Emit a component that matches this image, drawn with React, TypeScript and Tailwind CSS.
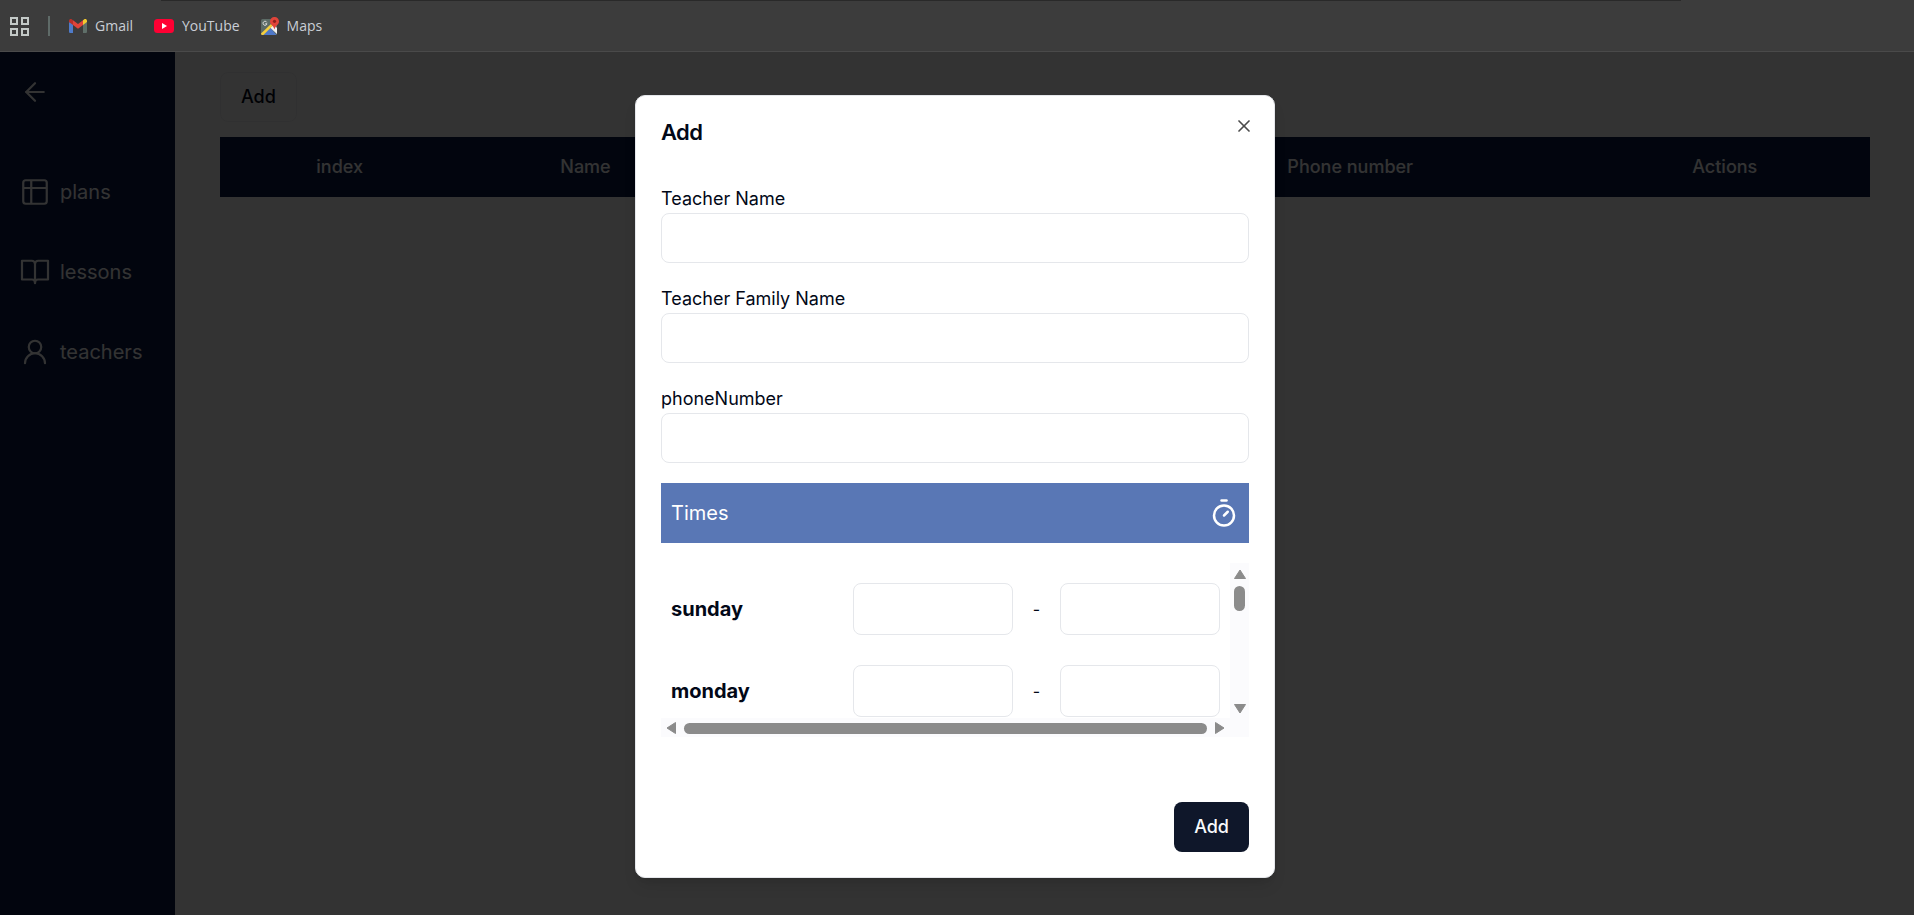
import type { ReactNode } from "react";
import { ArrowLeft, Timer, UserRound, X } from "lucide-react";

const bookmarks = [
  { label: "Gmail", icon: <GmailIcon /> },
  { label: "YouTube", icon: <YouTubeIcon /> },
  { label: "Maps", icon: <MapsIcon /> },
];

const links = [
  { label: "plans", icon: <PlansIcon /> },
  { label: "lessons", icon: <LessonsIcon /> },
  { label: "teachers", icon: <UserRound size={30} strokeWidth={1.75} /> },
];

const columns = [
  { label: "index", width: "w-[14.5%]" },
  { label: "Name", width: "w-[15.3%]" },
  { label: "", width: "w-[24.8%]" },
  { label: "Phone number", width: "w-[27.8%]" },
  { label: "Actions", width: "w-[17.6%]" },
];

const fields = [
  { id: "name", label: "Teacher Name" },
  { id: "family", label: "Teacher Family Name" },
  { id: "phone", label: "phoneNumber" },
];

const days = ["sunday", "monday"];

function GmailIcon() {
  return (
    <svg width="18" height="14" viewBox="0 0 18 14">
      <path d="M0 3v9.7C0 13.4.6 14 1.3 14H4V5z" fill="#4f7bc9" />
      <path d="M18 3v9.7c0 .7-.6 1.3-1.3 1.3H14V5z" fill="#5f6f69" />
      <path d="M14 1.2V6l4-3V1.800C18 .2 16.200-.5 15 .4z" fill="#f4c92f" />
      <path d="M0 1.800V3l4 3V1.200L3 .4C1.800-.5 0 .2 0 1.800z" fill="#b9302a" />
      <path d="M4 6V1.200l5 3.800 5-3.800V6L9 9.800z" fill="#e0443a" />
    </svg>
  );
}

function YouTubeIcon() {
  return (
    <svg width="20" height="14" viewBox="0 0 20 14">
      <rect width="20" height="14" rx="3.5" fill="#ff0033" />
      <path d="M8 4l5 3-5 3z" fill="#fff" />
    </svg>
  );
}

function MapsIcon() {
  return (
    <svg width="18" height="18" viewBox="0 0 18 18">
      <rect y="2" width="16" height="16" rx="1.5" fill="#5c6b66" />
      <path d="M2 18L9 10.500l6.500 7.500z" fill="#4f78c8" />
      <path d="M9 10.500l4-2.500 3 3v6z" fill="#f1f1f1" />
      <path
        d="M0 16.500L10 7l1.800 1.800L2.400 18H1.500A1.500 1.500 0 0 1 0 16.500z"
        fill="#f5cf3d"
      />
      <path
        d="M5.800 5.300A2 2 0 1 0 6 6.800H4.300"
        fill="none"
        stroke="#e6e6e6"
        strokeWidth="1"
      />
      <path
        d="M13.500 0A4.400 4.400 0 0 0 9 4.400c0 3 3.300 3.600 4.500 8.100 1.200-4.500 4.500-5.100 4.500-8.100A4.400 4.400 0 0 0 13.500 0z"
        fill="#e0443a"
      />
      <circle cx="13.5" cy="4.3" r="1.6" fill="#8d211c" />
    </svg>
  );
}

function AppsIcon() {
  return (
    <svg
      width="19"
      height="19"
      viewBox="0 0 19 19"
      fill="none"
      stroke="#c3c9c7"
      strokeWidth="2"
    >
      <rect x="1" y="1" width="6" height="6" />
      <rect x="12" y="1" width="6" height="6" />
      <rect x="1" y="12" width="6" height="6" />
      <rect x="12" y="12" width="6" height="6" />
    </svg>
  );
}

function PlansIcon() {
  return (
    <svg
      width="30"
      height="30"
      viewBox="0 0 24 24"
      fill="none"
      stroke="currentColor"
      strokeWidth="1.75"
    >
      <rect x="2.6" y="2.6" width="18.8" height="18.8" rx="2" />
      <path d="M2.600 8.800h18.800M9 2.600v18.800" />
    </svg>
  );
}

function LessonsIcon() {
  return (
    <svg
      width="30"
      height="30"
      viewBox="0 0 24 24"
      fill="none"
      stroke="currentColor"
      strokeWidth="1.75"
      strokeLinecap="round"
      strokeLinejoin="round"
    >
      <path d="M12 5.200A2.600 2.600 0 0 0 9.400 3H1.600v15h8a2.400 2.400 0 0 1 2.400 2.400" />
      <path d="M12 5.200A2.600 2.600 0 0 1 14.600 3h7.800v15h-8a2.400 2.400 0 0 0-2.400 2.400" />
      <path d="M12 5.200V21" />
    </svg>
  );
}

function Arrow({ className }: { className?: string }) {
  return (
    <svg
      width="12"
      height="10"
      viewBox="0 0 12 10"
      className={className}
      fill="#8b8b8b"
      stroke="#8b8b8b"
      strokeWidth="1"
      strokeLinejoin="round"
    >
      <path d="M6 1l5.500 8.500H.5z" />
    </svg>
  );
}

function TimeInput({ label }: { label: string }) {
  return (
    <input
      type="text"
      aria-label={label}
      className="h-[52px] w-40 rounded-lg border border-[#e5e7eb] px-3 text-lg outline-none"
    />
  );
}

function ScrollBox({ children }: { children: ReactNode }) {
  return (
    <div className="mt-5 grid grid-cols-[1fr_19px] grid-rows-[155px_19px]">
      <div className="overflow-hidden">{children}</div>
      <div className="flex flex-col items-center bg-[#fbfbfd] pt-1.5 pb-1">
        <Arrow />
        <div className="mt-[7px] h-[25px] w-[11px] rounded-full bg-[#8b8b8b]" />
        <Arrow className="mt-auto rotate-180" />
      </div>
      <div className="flex items-center bg-[#fbfbfd] px-1 pt-px">
        <Arrow className="-rotate-90" />
        <div className="mx-[7px] h-[11px] flex-1 rounded-full bg-[#8b8b8b]" />
        <Arrow className="rotate-90" />
      </div>
      <div className="bg-[#fbfbfd]" />
    </div>
  );
}

function AddTeacherModal() {
  return (
    <div className="absolute inset-0 z-50 flex items-start justify-center bg-black/80 pt-[43px] pr-1">
      <div
        role="dialog"
        aria-labelledby="modal-title"
        className="relative w-[640px] max-w-full rounded-[10px] border border-[#e5e7eb] bg-white p-[25px] shadow-lg"
      >
        <h2
          id="modal-title"
          className="text-[22px] leading-[22px] font-semibold tracking-tight"
        >
          Add
        </h2>
        <button
          aria-label="Close"
          className="absolute top-5 right-5 text-black opacity-70"
        >
          <X size={20} />
        </button>

        {/* Fields */}
        <form>
          <div className="mt-11 flex flex-col gap-6">
            {fields.map((field) => (
              <div key={field.id} className="flex flex-col gap-0.5">
                <label htmlFor={field.id} className="text-lg leading-6">
                  {field.label}
                </label>
                <input
                  id={field.id}
                  type="text"
                  className="h-[50px] w-full rounded-lg border border-[#e5e7eb] px-4 text-lg outline-none"
                />
              </div>
            ))}
          </div>

          {/* Times */}
          <div className="mt-5 flex h-[60px] items-center justify-between bg-[#5977b5] px-2.5 text-white">
            <span className="text-xl">Times</span>
            <Timer size={30} />
          </div>
          <ScrollBox>
            <div className="flex flex-col gap-[30px] px-2.5 pt-5">
              {days.map((day) => (
                <div key={day} className="flex items-center justify-between">
                  <span className="text-xl font-bold">{day}</span>
                  <div className="flex items-center">
                    <TimeInput label={`${day} from`} />
                    <span className="w-[47px] text-center">-</span>
                    <TimeInput label={`${day} to`} />
                  </div>
                </div>
              ))}
            </div>
          </ScrollBox>

          <div className="mt-[65px] flex justify-end">
            <button
              type="button"
              className="h-[50px] rounded-lg bg-[#0f172a] px-5 text-lg font-medium text-[#f8fafc]"
            >
              Add
            </button>
          </div>
        </form>
      </div>
    </div>
  );
}

export default function App() {
  return (
    <div className="flex min-h-screen flex-col bg-white font-['Inter',sans-serif] text-[#020817]">
      {/* Bookmarks bar */}
      <header className="flex h-[52px] flex-col border-b border-[#4a4a4a] bg-[#3c3c3c]">
        <div className="mr-[12.2%] ml-[8.4%] h-px bg-[#292929]" />
        <nav className="flex flex-1 items-center pl-2.5 font-['Open_Sans',sans-serif] text-sm text-[#c9ced6]">
          <button aria-label="Apps">
            <AppsIcon />
          </button>
          <div className="mr-[19px] ml-[19px] h-5 w-0.5 bg-[#5f6b68]" />
          <div className="flex items-center gap-[21px]">
            {bookmarks.map((item) => (
              <a key={item.label} href="#" className="flex items-center gap-2">
                {item.icon}
                {item.label}
              </a>
            ))}
          </div>
        </nav>
      </header>

      <div className="relative flex flex-1">
        {/* Sidebar */}
        <aside className="flex w-[175px] flex-col bg-[#0a1c48] px-5 text-white">
          <button aria-label="Back" className="mt-[25px] self-start">
            <ArrowLeft size={30} strokeWidth={1.75} />
          </button>
          <nav className="mt-[70px] flex flex-col gap-[50px]">
            {links.map((link) => (
              <a
                key={link.label}
                href="#"
                className="flex items-center gap-2.5 text-xl leading-[30px]"
              >
                {link.icon}
                {link.label}
              </a>
            ))}
          </nav>
        </aside>

        {/* Teachers */}
        <main className="flex-1 pt-5 pr-11 pl-[45px]">
          <button className="h-[50px] rounded-lg border border-[#f1f1f4] px-5 text-lg font-medium">
            Add
          </button>
          <table className="mt-[15px] w-full table-fixed">
            <thead>
              <tr className="h-[60px] bg-[#0a1c48] text-white">
                {columns.map((column, i) => (
                  <th key={i} className={`text-lg font-medium ${column.width}`}>
                    {column.label}
                  </th>
                ))}
              </tr>
            </thead>
          </table>
        </main>

        <AddTeacherModal />
      </div>
    </div>
  );
}
